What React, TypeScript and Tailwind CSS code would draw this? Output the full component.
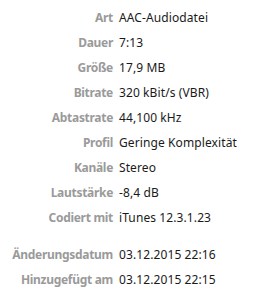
const rows: [string, string][] = [
  ["Art", "AAC-Audiodatei"],
  ["Dauer", "7:13"],
  ["Größe", "17,9 MB"],
  ["Bitrate", "320 kBit/s (VBR)"],
  ["Abtastrate", "44,100 kHz"],
  ["Profil", "Geringe Komplexität"],
  ["Kanäle", "Stereo"],
  ["Lautstärke", "-8,4 dB"],
  ["Codiert mit", "iTunes 12.3.1.23"],
];

const dates: [string, string][] = [
  ["Änderungsdatum", "03.12.2015 22:16"],
  ["Hinzugefügt am", "03.12.2015 22:15"],
];

function Row({ label, value }: { label: string; value: string }) {
  return (
    <div className="flex h-[25px] items-center">
      <div className="w-[113px] shrink-0 text-right font-bold tracking-[-0.3px] text-[#9a9a9a]">{label}</div>
      <div className="pl-[6px] tracking-[0.1px] text-[#1a1a1a]">{value}</div>
    </div>
  );
}

export default function App() {
  return (
    <div
      className="w-[255px] h-[302px] bg-white pt-[5px] text-[12px] leading-none"
      style={{ fontFamily: '"Noto Sans", "Open Sans", sans-serif' }}
    >
      {rows.map(([l, v]) => (
        <Row key={l} label={l} value={v} />
      ))}
      <div className="h-[12px]" />
      {dates.map(([l, v]) => (
        <Row key={l} label={l} value={v} />
      ))}
    </div>
  );
}
